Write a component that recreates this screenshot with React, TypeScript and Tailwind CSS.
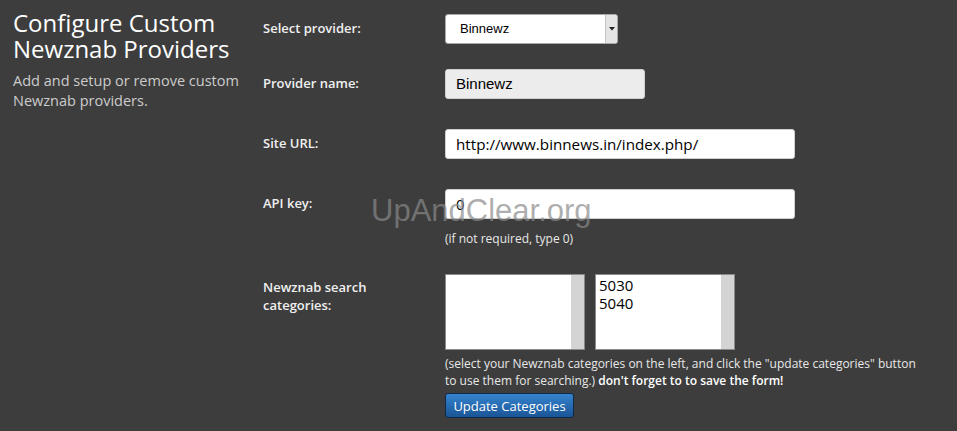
import React from "react";

export default function App() {
  const os = { fontFamily: '"Open Sans", "Noto Sans", sans-serif' };
  return (
    <div className="relative w-[957px] h-[431px] overflow-hidden bg-[#3d3d3d] flex" style={os}>
      {/* Left column */}
      <div className="w-[263px] pl-[13px] pt-[10px] shrink-0">
        <h1 className="text-[24px] leading-[26px] text-white font-normal">
          Configure Custom Newznab Providers
        </h1>
        <p className="mt-[9px] text-[14.5px] leading-[20px] text-[#cccccc] pr-[10px]">
          Add and setup or remove custom Newznab providers.
        </p>
      </div>

      {/* Right column */}
      <div className="flex flex-col text-[13px] text-[#f0f0f0]">
        {/* Select provider */}
        <div className="flex items-center mt-[14px] h-[30px]">
          <label className="w-[182px] font-semibold">Select provider:</label>
          <div className="relative w-[173px] h-[30px] bg-white border border-[#a9a9a9] rounded-[3px] flex items-center">
            <span className="pl-[14px] text-[13px] text-black" style={{ fontFamily: '"Liberation Sans", Arial, sans-serif' }}>
              Binnewz
            </span>
            <div className="absolute right-0 top-0 bottom-0 w-[12px] bg-[#e4e4e4] border-l border-[#c8c8c8] rounded-r-[2px] flex items-center justify-center">
              <svg width="6" height="4" viewBox="0 0 6 4">
                <path d="M0 0h6L3 3.5z" fill="#222" />
              </svg>
            </div>
          </div>
        </div>

        {/* Provider name */}
        <div className="flex items-center mt-[25px] h-[30px]">
          <label className="w-[182px] font-semibold">Provider name:</label>
          <div className="w-[200px] h-[30px] bg-[#ececec] border border-[#d0d0d0] rounded-[3px] flex items-center pl-[10px]">
            <span className="text-[15px] text-black" style={{ fontFamily: '"Liberation Sans", Arial, sans-serif' }}>
              Binnewz
            </span>
          </div>
        </div>

        {/* Site URL */}
        <div className="flex items-center mt-[30px] h-[30px]">
          <label className="w-[182px] font-semibold">Site URL:</label>
          <div className="w-[350px] h-[30px] bg-white border border-[#d0d0d0] rounded-[3px] flex items-center pl-[10px]">
            <span className="text-[15.2px] text-black">http://www.binnews.in/index.php/</span>
          </div>
        </div>

        {/* API key */}
        <div className="flex items-center mt-[30px] h-[30px]">
          <label className="w-[182px] font-semibold">API key:</label>
          <div className="w-[350px] h-[30px] bg-white border border-[#d0d0d0] rounded-[3px] flex items-center pl-[10px]">
            <span className="text-[15px] text-black">0</span>
          </div>
        </div>
        <div className="flex mt-[11px]">
          <div className="w-[182px]" />
          <span className="text-[12px] leading-[17px] text-[#e8e8e8]">(if not required, type 0)</span>
        </div>

        {/* Categories */}
        <div className="flex mt-[27px]">
          <label className="w-[182px] font-semibold leading-[18px] pt-[4px]">
            Newznab search
            <br />
            categories:
          </label>
          <div className="flex flex-col">
            <div className="flex gap-[10px]">
              <div className="w-[140px] h-[76px] bg-white border border-[#8a8a8a] flex">
                <div className="flex-1" />
                <div className="w-[13px] bg-[#d4d4d4]" />
              </div>
              <div className="w-[140px] h-[76px] bg-white border border-[#8a8a8a] flex">
                <div className="flex-1 pl-[3px] pt-[1px] text-[15px] leading-[18px] text-black">
                  <div>5030</div>
                  <div>5040</div>
                </div>
                <div className="w-[13px] bg-[#d4d4d4]" />
              </div>
            </div>
            <p className="w-[476px] mt-[5px] text-[12px] leading-[17px] text-[#e8e8e8]">
              (select your Newznab categories on the left, and click the "update categories" button to use them for searching.){" "}
              <b className="font-semibold text-white">don't forget to to save the form!</b>
            </p>
            <button className="mt-[4px] w-[129px] h-[25px] rounded-[3px] border border-[#0f2a48] bg-gradient-to-b from-[#3584cf] to-[#1a5596] text-white text-[13px] leading-[22px]">
              Update Categories
            </button>
          </div>
        </div>
      </div>

      {/* Watermark */}
      <div
        className="absolute left-[371px] top-[193px] text-[31px] leading-[36px] text-[#8a8a8a]/70 pointer-events-none"
        style={{ fontFamily: '"Liberation Sans", Arial, sans-serif' }}
      >
        UpAndClear.org
      </div>
    </div>
  );
}
